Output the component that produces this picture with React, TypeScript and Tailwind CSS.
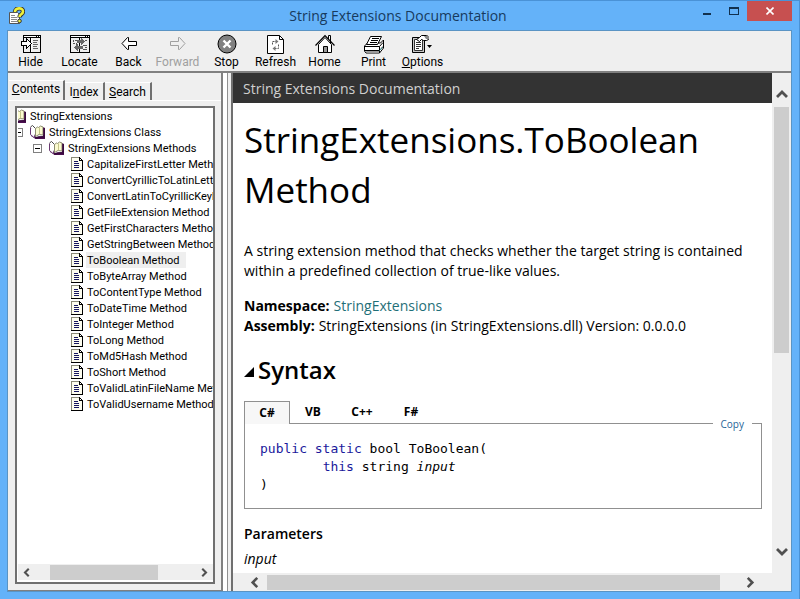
import type { ReactNode } from 'react';

type Tool = { label: string; icon: ReactNode; disabled?: boolean; accessKey?: boolean };

function HideIcon() {
  return (
    <svg width="20" height="18" viewBox="0 0 20 18" shapeRendering="crispEdges">
      <path d="M2 0h18v18H2z" fill="#000" />
      <path d="M3 3h6v14H3zM10 3h9v14h-9z" fill="#efefef" />
      <path d="M3 1h12v1H3zM16 1h1v1h-1zM18 1h1v1h-1z" fill="#fff" />
      <path d="M10 3h1v14h-1z" fill="#fff" />
      <path d="M12 5h5v1h-5zM12 7h4v1h-4zM12 9h5v1h-5zM12 11h4v1h-4zM12 13h5v1h-5z" fill="#666" />
      <path d="M0 6h5V3h1v1h1v1h1v1h1v1h1v1h1v1h-1v1H9v1H8v1H7v1H6v1H5v-3H0z" fill="#000" />
      <path d="M1 7h5V5h1v1h1v1h1v1h1v1H9v1H8v1H7v1H6v-2H1z" fill="#fff" />
    </svg>
  );
}

function LocateIcon() {
  return (
    <svg width="20" height="18" viewBox="0 0 20 18" shapeRendering="crispEdges">
      <path d="M0 0h20v18H0z" fill="#000" />
      <path d="M1 3h8v14H1zM10 3h9v14h-9z" fill="#efefef" />
      <path d="M1 1h14v1H1zM16 1h1v1h-1zM18 1h1v1h-1z" fill="#fff" />
      <path d="M3 5h1v2H3zM5 5h2v1H5zM3 8h2v1H3zM6 8h1v2H6zM13 10h4v1h-4zM15 5h2v1h-2zM15 12h2v1h-2zM13 14h4v1h-4z" fill="#555" />
      <path d="M7 5h4V3h1v1h1v1h1v1h1v1h-1v1h-1v1h-1v1h-1V8H7z" fill="#666" />
      <path d="M13 11H8V9H7v1H6v1H5v1H4v1h1v1h1v1h1v1h1v-2h5z" fill="#666" />
    </svg>
  );
}

function ArrowIcon({ forward = false }: { forward?: boolean }) {
  return (
    <svg width="16" height="14" viewBox="0 0 16 14" fill={forward ? '#efefef' : '#fff'} stroke={forward ? '#a0a0a0' : '#000'}>
      {forward ? (
        <path d="M.5 4.500h8v-4h1l5.500 6-5.500 6h-1v-4h-8z" />
      ) : (
        <path d="M15.500 4.500h-8v-4h-1L1 6.500l5.500 6h1v-4h8z" />
      )}
    </svg>
  );
}

function StopIcon() {
  return (
    <svg width="20" height="20" viewBox="0 0 20 20">
      <circle cx="10" cy="10" r="9" fill="#808080" stroke="#000" strokeWidth="1" />
      <path d="M6.500 6.500l7 7M13.500 6.500l-7 7" stroke="#fff" strokeWidth="2.400" />
    </svg>
  );
}

function RefreshIcon() {
  return (
    <svg width="17" height="19" viewBox="0 0 17 19">
      <path d="M.5.5h12l4 4v14H.5z" fill="#fff" stroke="#000" />
      <path d="M12.500.5v4h4" fill="none" stroke="#000" />
      <path d="M5.500 9.500v-3h4M11.500 9.500v4h-4" fill="none" stroke="#555" strokeDasharray="2 1" />
      <path d="M8.500 4l3 2.500-3 2.500zM8.500 11l-3 2.500 3 2.500z" fill="#777" />
    </svg>
  );
}

function HomeIcon() {
  return (
    <svg width="20" height="20" viewBox="0 0 20 20">
      <path d="M13.500 5V1.500h2V9" fill="#fff" stroke="#000" />
      <path d="M3.500 10.500L10 3.500l6.500 7v8h-13z" fill="#fff" stroke="#000" />
      <path d="M.5 11.500L10 1.500l9.500 10" fill="none" stroke="#000" strokeWidth="1.200" />
      <path d="M8.500 18.500v-6h4v6z" fill="#999" stroke="#000" />
    </svg>
  );
}

function PrintIcon() {
  return (
    <svg width="20" height="19" viewBox="0 0 20 19">
      <path d="M.5 11l3-3h13l3-3v8l-4 5H2l-1.500-2z" fill="#fff" stroke="#000" />
      <path d="M6.500 1.500h11l-4 8h-11z" fill="#fff" stroke="#000" />
      <path d="M8 3.500h7M7 5.500h7M6 7.500h7" stroke="#000" />
      <path d="M1 11.500h14.500l3.500-4M1 15.500h14.500l3.500-4M15.500 11.500V18" stroke="#000" fill="none" />
      <path d="M2 16h13v2H3z" fill="#999" />
      <path d="M15.500 15.500l3-3" stroke="#3a9a9a" />
    </svg>
  );
}

function OptionsIcon() {
  return (
    <svg width="21" height="18" viewBox="0 0 21 18">
      <path d="M.5 2.500h12v15H.5z" fill="#c8c8c8" stroke="#000" />
      <path d="M2.500 4.500h8v11h-8z" fill="#fff" stroke="#333" />
      <path d="M4 7.500h5M4 9.500h5M4 11.500h5M4 13.500h3" stroke="#333" />
      <path d="M4.500 4.500l3-2 2-2h5l2 1v3l-2 1h-3l-2-1-2 2z" fill="#fff" stroke="#000" />
      <path d="M12 1h5v3h-3z" fill="#888" />
      <path d="M15 10h5l-2.500 3z" fill="#000" />
    </svg>
  );
}

function HelpDocIcon() {
  return (
    <svg width="16" height="17" viewBox="0 0 16 17">
      <path d="M.5 5.500h8l2 2v9H.5z" fill="#fff" stroke="#555" />
      <path d="M2 8.500h4M2 10.500h6M2 12.500h6M2 14.500h6" stroke="#888" />
      <path d="M6 5c0-4.500 8-5 8-.5 0 3-3.500 2.500-3.500 6" fill="none" stroke="#333" strokeWidth="4.400" />
      <path d="M6 5c0-4.500 8-5 8-.5 0 3-3.500 2.500-3.500 5.500" fill="none" stroke="#eef03c" strokeWidth="2.600" />
      <circle cx="10.500" cy="14" r="1.800" fill="#eef03c" stroke="#333" />
    </svg>
  );
}

function BookIcon() {
  return (
    <svg width="15" height="14" viewBox="0 0 15 14" className="shrink-0">
      <path d="M0 3l1 8 5 3h9V3l-2-1v9l-7 1z" fill="#4b0f50" />
      <path d="M.5 2.500v7l4 3.500V4.500z" fill="#fff" stroke="#6b3a72" />
      <path d="M.5 2l2-1.500 3 3V12" fill="#fff" stroke="#444" />
      <path d="M5.500 3.500l2-1.500 1 .5 2-1.500 2.500 1v8l-4-.5-3.500 2z" fill="#fbfbd0" stroke="#8c8c70" />
      <path d="M9.500 2.500v7" stroke="#c5c58a" />
      <path d="M5 13.200l4-1.200h5.200V3" fill="none" stroke="#3a0a3e" strokeWidth="1.600" />
    </svg>
  );
}

function PageIcon() {
  return (
    <svg width="12" height="14" viewBox="0 0 12 14" shapeRendering="crispEdges" className="shrink-0">
      <path d="M0 0h9v1h1v1h1v1h1v11H0z" fill="#000" />
      <path d="M0 0h8v1H0zM0 0h1v13H0z" fill="#8a8a78" />
      <path d="M1 1h7v3h3v9H1z" fill="#fdfdf0" />
      <path d="M9 2h1v1H9z" fill="#fff" />
      <path d="M3 4h4v1H3zM3 6h5v1H3zM3 8h5v1H3zM3 10h5v1H3z" fill="#151560" />
    </svg>
  );
}

const tools: Tool[] = [
  { label: 'Hide', icon: <HideIcon /> },
  { label: 'Locate', icon: <LocateIcon /> },
  { label: 'Back', icon: <ArrowIcon /> },
  { label: 'Forward', icon: <ArrowIcon forward />, disabled: true },
  { label: 'Stop', icon: <StopIcon /> },
  { label: 'Refresh', icon: <RefreshIcon /> },
  { label: 'Home', icon: <HomeIcon /> },
  { label: 'Print', icon: <PrintIcon /> },
  { label: 'Options', icon: <OptionsIcon />, accessKey: true },
];

const methods = [
  'CapitalizeFirstLetter Metho',
  'ConvertCyrillicToLatinLette',
  'ConvertLatinToCyrillicKeyb',
  'GetFileExtension Method',
  'GetFirstCharacters Method',
  'GetStringBetween Method',
  'ToBoolean Method',
  'ToByteArray Method',
  'ToContentType Method',
  'ToDateTime Method',
  'ToInteger Method',
  'ToLong Method',
  'ToMd5Hash Method',
  'ToShort Method',
  'ToValidLatinFileName Met',
  'ToValidUsername Method',
];

function TitleBar() {
  return (
    <header className="flex h-[29px] shrink-0 items-start">
      <div className="flex w-[102px] pt-1.5 pl-[9px]">
        <HelpDocIcon />
      </div>
      <h1 className="flex-1 pt-[5px] text-center text-[14px] leading-5 text-[#173a5e]">String Extensions Documentation</h1>
      <div className="flex">
        <button type="button" aria-label="Minimize" className="flex h-5 w-[26px] items-end justify-center pb-[6px]">
          <span className="h-0.5 w-2 bg-[#12314f]" />
        </button>
        <button type="button" aria-label="Maximize" className="flex h-5 w-[27px] items-center justify-center">
          <span className="h-2 w-[10px] border border-t-2 border-[#12314f]" />
        </button>
        <button type="button" aria-label="Close" className="mr-[7px] flex h-5 w-[45px] items-center justify-center bg-[#c75050]">
          <svg width="8" height="8" viewBox="0 0 8 8" stroke="#fff" strokeWidth="1.600">
            <path d="M.5.5l7 7M7.500.5l-7 7" />
          </svg>
        </button>
      </div>
    </header>
  );
}

function Toolbar() {
  return (
    <nav aria-label="Toolbar" className="flex h-[42px] shrink-0 border-b-2 border-[#808080] font-[Roboto,'Liberation_Sans',sans-serif]">
      {tools.map((tool) => (
        <button
          key={tool.label}
          type="button"
          disabled={tool.disabled}
          className="-ml-0.5 mr-0.5 flex w-[49px] flex-col items-center text-[12px] leading-4 text-black disabled:text-[#a0a0a0]"
        >
          <span className="flex h-[26px] items-center justify-center">{tool.icon}</span>
          <span className="-mt-[3px]">
            {tool.accessKey ? (
              <>
                <u>{tool.label[0]}</u>
                {tool.label.slice(1)}
              </>
            ) : (
              tool.label
            )}
          </span>
        </button>
      ))}
    </nav>
  );
}

function TreeRow({ level, label, expandable = false, book = false, selected = false }: { level: number; label: string; expandable?: boolean; book?: boolean; selected?: boolean }) {
  const indent = ['pl-0', 'pl-[19px]', 'pl-[38px]', 'pl-[57px]'][level];
  return (
    <li className={`flex h-4 items-center whitespace-nowrap ${indent}`}>
      <span className="flex w-[19px] shrink-0 pl-[3px]">
        {expandable && (
          <button type="button" aria-label={`Collapse ${label}`} className="flex size-[9px] items-center justify-center border border-[#808080] bg-white">
            <span className="h-px w-[5px] bg-black" />
          </button>
        )}
      </span>
      <span className={`flex w-[19px] shrink-0 ${book ? '' : 'pl-[3px]'}`}>{book ? <BookIcon /> : <PageIcon />}</span>
      <a href="#" className={`-ml-px h-4 pl-px leading-[17px] ${selected ? 'bg-[#efefef] pr-1.5' : ''}`}>
        {label}
      </a>
    </li>
  );
}

function Chevron({ direction, size = 11 }: { direction: 'left' | 'right' | 'up' | 'down'; size?: number }) {
  const paths = { left: 'M9 1L4 6l5 5', right: 'M3 1l5 5-5 5', up: 'M1 8l5-5 5 5', down: 'M1 4l5 5 5-5' };
  return (
    <svg width={size} height={size} viewBox="0 0 12 12" fill="none" stroke="#505050" strokeWidth="2.800">
      <path d={paths[direction]} />
    </svg>
  );
}

function Sidebar() {
  const tab = 'border-r-2 border-[#707070] border-t border-t-white';
  return (
    <aside className="flex w-[215px] shrink-0 flex-col border-r-2 border-b border-r-[#808080] border-b-[#808080] pt-[7px] font-[Roboto,'Liberation_Sans',sans-serif] text-[11px]">
      <div role="tablist" className="ml-px flex h-5 items-end text-[12px] leading-4">
        <button type="button" role="tab" aria-selected="true" className={`h-5 w-[56px] pb-1 text-center ${tab}`}>
          <u>C</u>ontents
        </button>
        <button type="button" role="tab" aria-selected="false" className={`h-[18px] w-10 ${tab}`}>
          I<u>n</u>dex
        </button>
        <button type="button" role="tab" aria-selected="false" className={`h-[18px] w-[47px] ${tab}`}>
          <u>S</u>earch
        </button>
      </div>
      <div className="flex min-h-0 flex-1 flex-col border-t border-white pt-[5px] pr-[6px] pb-[6px] pl-[7px]">
        <div className="flex min-h-0 flex-1 flex-col border-2 border-[#707070] bg-white pb-0.5 pl-px">
          <ul className="min-h-0 flex-1 overflow-hidden">
            <li className="-ml-[26px]">
              <ul>
                <TreeRow level={0} label="StringExtensions" book />
                <TreeRow level={1} label="StringExtensions Class" expandable book />
                <TreeRow level={2} label="StringExtensions Methods" expandable book />
                {methods.map((name) => (
                  <TreeRow key={name} level={3} label={name} selected={name === 'ToBoolean Method'} />
                ))}
              </ul>
            </li>
          </ul>
          <div className="flex h-4 shrink-0 items-center bg-[#efefef]">
            <button type="button" aria-label="Scroll contents left" className="flex w-8 pl-1">
              <Chevron direction="left" size={9} />
            </button>
            <span className="h-[15px] w-[108px] bg-[#cdcdcd]" />
            <button type="button" aria-label="Scroll contents right" className="ml-auto pr-1">
              <Chevron direction="right" size={9} />
            </button>
          </div>
        </div>
      </div>
    </aside>
  );
}

function SyntaxSection() {
  return (
    <section>
      <h2 className="mt-[15px] flex h-[38px] items-center text-[24px] leading-[38px] font-semibold">
        <svg width="10" height="10" viewBox="0 0 10 10" className="mt-1 mr-1">
          <path d="M10 0v10H0z" fill="#000" />
        </svg>
        Syntax
      </h2>
      <div role="tablist" className="mt-3 flex h-[22px] text-[12px] leading-5 font-bold">
        <button type="button" role="tab" aria-selected="true" className="-mb-px w-[46px] border border-b-0 border-[#909090] bg-[#f7f7f7]">
          C#
        </button>
        <button type="button" role="tab" aria-selected="false" className="w-[46px]">VB</button>
        <button type="button" role="tab" aria-selected="false" className="w-[52px]">C++</button>
        <button type="button" role="tab" aria-selected="false" className="w-[46px]">F#</button>
      </div>
      <div className="relative mr-[10px] h-[86px] border border-[#909090] px-[15px] pt-4 font-['DejaVu_Sans_Mono',monospace] text-[13px] leading-[18px]">
        <span className="absolute -top-px left-0 h-px w-11 bg-[#f7f7f7]" />
        <button type="button" className="absolute -top-2 right-[9px] bg-white px-2 font-['Open_Sans','Noto_Sans',sans-serif] text-[10px] leading-4 text-[#1f6599]">
          Copy
        </button>
        <pre className="font-['DejaVu_Sans_Mono',monospace]">
          <span className="text-[#1a1a9c]">public</span> <span className="text-[#1a1a9c]">static</span> bool ToBoolean({'\n'}
          {'        '}
          <span className="text-[#1a1a9c]">this</span> string <i>input</i>
          {'\n'})
        </pre>
      </div>
    </section>
  );
}

function Topic() {
  return (
    <main className="flex min-w-0 flex-1 border-l-2 border-[#707070] bg-[#efefef]">
      <div className="flex min-w-0 flex-1 flex-col">
        <div className="h-[30px] shrink-0 bg-[#333] pl-[10px] text-[14px] leading-[31px] text-[#d0d0d0]">String Extensions Documentation</div>
        <article className="min-h-0 flex-1 overflow-hidden bg-white pt-3 pl-[11px] text-[14px] leading-5 text-black">
          <h1 className="text-[35px] leading-[50px] font-normal">StringExtensions.ToBoolean Method</h1>
          <p className="mt-[26px] pr-2">A string extension method that checks whether the target string is contained within a predefined collection of true-like values.</p>
          <dl className="mt-[15px]">
            <div className="flex gap-1">
              <dt className="font-bold">Namespace:</dt>
              <dd>
                <a href="#" className="text-[#1f6f78]">StringExtensions</a>
              </dd>
            </div>
            <div className="flex gap-1">
              <dt className="font-bold">Assembly:</dt>
              <dd>StringExtensions (in StringExtensions.dll) Version: 0.0.0.0</dd>
            </div>
          </dl>
          <SyntaxSection />
          <h3 className="mt-[15px] font-semibold">Parameters</h3>
          <p className="mt-[5px] italic">input</p>
        </article>
        <div className="flex h-[18px] shrink-0 items-center">
          <button type="button" aria-label="Scroll topic left" className="flex w-[34px] justify-center pl-2">
            <Chevron direction="left" />
          </button>
          <span className="mr-[25px] h-[15px] flex-1 bg-[#cdcdcd]" />
          <button type="button" aria-label="Scroll topic right" className="flex w-[27px]">
            <Chevron direction="right" />
          </button>
        </div>
      </div>
      <div className="flex w-[19px] shrink-0 flex-col items-center pt-4 pb-[34px]">
        <button type="button" aria-label="Scroll topic up" className="flex">
          <Chevron direction="up" size={12} />
        </button>
        <span className="mt-[6px] h-[246px] w-[15px] bg-[#cdcdcd]" />
        <button type="button" aria-label="Scroll topic down" className="mt-auto flex">
          <Chevron direction="down" size={12} />
        </button>
      </div>
    </main>
  );
}

export default function App() {
  return (
    <div className="flex h-screen flex-col border-t border-r border-t-[#4a92d6] border-r-[#4a92d6] bg-[#64b2f9] font-['Open_Sans','Noto_Sans',sans-serif]">
      <TitleBar />
      <div className="mr-[7px] mb-[7px] ml-[7px] flex min-h-0 flex-1 flex-col border border-[#5a94c4] bg-[#efefef]">
        <Toolbar />
        <div className="flex min-h-0 flex-1">
          <Sidebar />
          <div className="w-2 shrink-0 bg-white pl-1">
            <div className="h-full border-l border-[#909090] bg-[#efefef]" />
          </div>
          <Topic />
        </div>
      </div>
    </div>
  );
}
